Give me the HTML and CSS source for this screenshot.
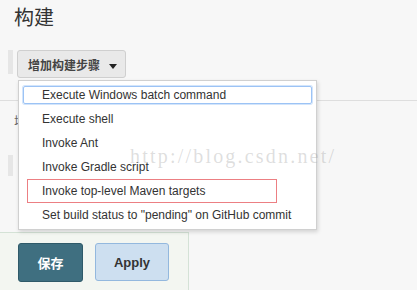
FILE: index.html
```html
<!DOCTYPE html>
<html lang="en">
<head>
    <meta charset="UTF-8">
    <title>构建</title>
    <link rel="stylesheet" href="styles.css">
</head>
<body>
    <h1 class="title">构建</h1>

    <div class="toolbar">
        <span class="handle"></span>
        <button class="add-step">增加构建步骤 <span class="caret"></span></button>
    </div>

    <div class="section">
        <p class="hint">增加</p>
        <span class="handle handle-low"></span>
    </div>

    <div class="footer">
        <button class="btn btn-save">保存</button>
        <button class="btn btn-apply">Apply</button>
    </div>

    <!-- dropdown menu for build steps -->
    <ul class="menu">
        <li class="focused">Execute Windows batch command</li>
        <li>Execute shell</li>
        <li>Invoke Ant</li>
        <li>Invoke Gradle script</li>
        <li class="marked">Invoke top-level Maven targets</li>
        <li>Set build status to "pending" on GitHub commit</li>
    </ul>

    <div class="watermark">http://blog.csdn.net/</div>
</body>
</html>
```

FILE: styles.css
```css
body {
    font-family: "Liberation Sans", Arial, "Noto Sans CJK SC", sans-serif;
    background-color: #f7f7f7;
    color: #333;
    margin: 0;
    padding: 0;
    width: 417px;
    height: 290px;
    overflow: hidden;
    position: relative;
}
.title {
    margin: 0;
    padding: 5px 0 0 14px;
    height: 50px;
    box-sizing: border-box;
    font-size: 20px;
    font-weight: normal;
    line-height: 26px;
    color: #333;
}
.toolbar {
    display: flex;
    align-items: flex-start;
    gap: 4px;
    padding-left: 8px;
    height: 51px;
    border-bottom: 1px solid #dedede;
    box-sizing: border-box;
}
.handle {
    display: block;
    width: 5px;
    height: 24px;
    background: #e6e6e6;
}
.add-step {
    font-family: "Liberation Sans", "Noto Sans CJK SC", sans-serif;
    font-size: 12px;
    font-weight: bold;
    color: #444;
    background: #e9e9e9;
    border: 1px solid #cfcfcf;
    border-radius: 3px;
    height: 28px;
    width: 109px;
    padding: 0 0 0 10px;
    text-align: left;
}
.caret {
    display: inline-block;
    margin-left: 6px;
    border-left: 4px solid transparent;
    border-right: 4px solid transparent;
    border-top: 5px solid #222;
    vertical-align: middle;
}
.section {
    height: 131px;
    padding-left: 8px;
}
.hint {
    margin: 0;
    padding: 11px 0 0 6px;
    height: 25px;
    box-sizing: border-box;
    font-size: 12px;
    color: #666;
}
.handle-low {
    margin-top: 29px;
    height: 21px;
}
.footer {
    width: 189px;
    height: 58px;
    box-sizing: border-box;
    background: #f3f6f1;
    border-top: 1px solid #d4e2d6;
    border-right: 1px solid #d4e2d6;
    padding: 10px 0 0 18px;
    display: flex;
    gap: 12px;
    align-items: flex-start;
}
.btn {
    font-family: "Liberation Sans", "Noto Sans CJK SC", sans-serif;
    font-size: 13px;
    font-weight: bold;
    border-radius: 3px;
    height: 39px;
}
.btn-save {
    width: 65px;
    background: #3f6f80;
    border: 1px solid #2f5a69;
    color: #fff;
}
.btn-apply {
    width: 74px;
    height: 38px;
    background: #cddff0;
    border: 1px solid #93b8de;
    color: #333;
}
.menu {
    position: absolute;
    left: 18px;
    top: 80px;
    width: 299px;
    height: 150px;
    box-sizing: border-box;
    margin: 0;
    padding: 2px 0 0;
    list-style: none;
    background: #fff;
    border: 1px solid #d0d0d0;
    box-shadow: 1px 2px 4px rgba(0, 0, 0, 0.15);
    display: flex;
    flex-direction: column;
}
.menu li {
    position: relative;
    height: 16px;
    line-height: 16px;
    margin: 3px 4px;
    padding-left: 18px;
    font-size: 12px;
    color: #333;
    border: 1px solid transparent;
    border-radius: 2px;
}
.menu li.focused {
    border-color: #9cc3f5;
    box-shadow: 0 0 0 1px #d3e5fb;
}
.menu li.marked::after {
    content: "";
    position: absolute;
    left: 3px;
    top: -4px;
    width: 248px;
    height: 22px;
    border: 1px solid #ec7f83;
}
.watermark {
    position: absolute;
    left: 130px;
    top: 145px;
    font-family: "Liberation Serif", serif;
    font-size: 20px;
    letter-spacing: 2.2px;
    color: rgba(160, 160, 160, 0.35);
    pointer-events: none;
}
```
